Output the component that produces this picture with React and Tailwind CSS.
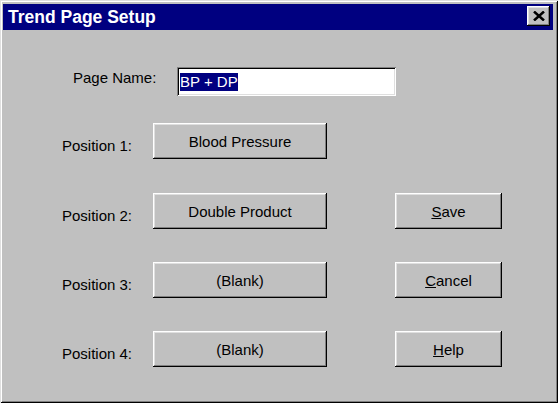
const raised =
  'shadow-[inset_-1px_-1px_#000,inset_1px_1px_#fff,inset_-2px_-2px_#808080,inset_2px_2px_#dfdfdf]';

const Btn = ({ className = '', children }) => (
  <button
    type="button"
    className={`bg-[#c0c0c0] text-black text-[15px] leading-[17px] flex items-center justify-center ${raised} ${className}`}
  >
    {children}
  </button>
);

const Row = ({ label, value, side, top }) => (
  <div className={`flex items-center h-[36px] ${top}`}>
    <div className="ml-[59px] w-[91px] pt-[8px] text-[15px] leading-[17px] text-black">{label}</div>
    <Btn className="w-[174px] h-[36px]">{value}</Btn>
    {side && <Btn className="ml-[68px] w-[107px] h-[36px]">{side}</Btn>}
  </div>
);

export default function App() {
  return (
    <div className="bg-white w-[559px] h-[403px]" style={{ fontFamily: '"Liberation Sans", Arial, sans-serif' }}>
      <div className="w-[558px] h-[403px] bg-[#c0c0c0] pt-[4px] pl-[3px] pr-[5px] shadow-[inset_1px_1px_#dfdfdf,inset_-1px_-1px_#000,inset_2px_2px_#fff,inset_-2px_-2px_#808080]">
        {/* title bar */}
        <div className="h-[26px] bg-[#000080] flex items-center justify-between pl-[5px] pr-[3px]">
          <span className="text-white font-bold text-[17.5px] leading-[20px]">Trend Page Setup</span>
          <div className={`w-[23px] h-[20px] bg-[#c0c0c0] flex items-center justify-center -mt-[2px] ${raised}`}>
            <svg width="12" height="10" viewBox="0 0 12 10">
              <path d="M1 0.5 L11 9.5 M11 0.5 L1 9.5" stroke="#000" strokeWidth="2.5" />
            </svg>
          </div>
        </div>

        {/* page name */}
        <div className="flex items-start mt-[37px] h-[29px]">
          <div className="ml-[70px] w-[104px] mt-[2px] text-[15px] leading-[17px] text-black">Page Name:</div>
          <div className="w-[219px] h-[29px] bg-white pl-[3px] pt-[3px] shadow-[inset_1px_1px_#808080,inset_-1px_-1px_#fff,inset_2px_2px_#000,inset_-2px_-2px_#dfdfdf]">
            <span className="inline-block bg-[#000080] text-white text-[15px] leading-[18px]">BP + DP</span>
          </div>
        </div>

        <Row top="mt-[27px]" label="Position 1:" value="Blood Pressure" />
        <Row top="mt-[34px]" label="Position 2:" value="Double Product" side={<span><u>S</u>ave</span>} />
        <Row top="mt-[33px]" label="Position 3:" value="(Blank)" side={<span><u>C</u>ancel</span>} />
        <Row top="mt-[33px]" label="Position 4:" value="(Blank)" side={<span><u>H</u>elp</span>} />
      </div>
    </div>
  );
}
